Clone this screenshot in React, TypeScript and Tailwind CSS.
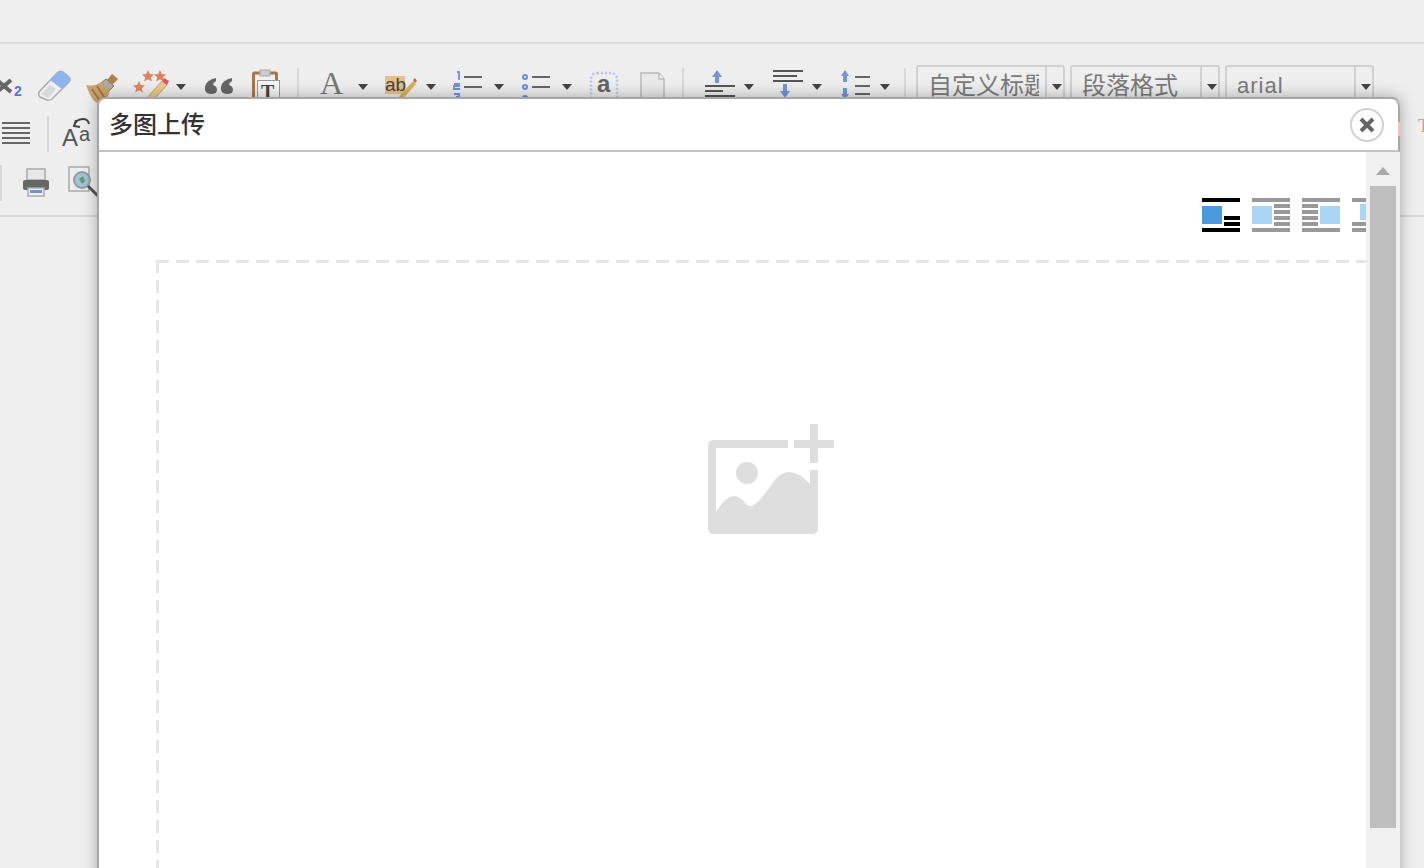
const Caret = ({ className = "" }: { className?: string }) => (
  <svg width="10" height="6" viewBox="0 0 10 6" className={"shrink-0 " + className}>
    <path d="M0 0h10L5 6z" fill="#444" />
  </svg>
);

const Sep = ({ className = "" }: { className?: string }) => (
  <div className={"w-0.5 self-start bg-[#d9d9d9] shrink-0 " + className} />
);

const Icon = ({ w, h, className = "", children }: { w: number; h: number; className?: string; children: React.ReactNode }) => (
  <svg width={w} height={h} viewBox={`0 0 ${w} ${h}`} className={"shrink-0 overflow-visible " + className}>
    {children}
  </svg>
);

const Lines = ({ x, ys, w }: { x: number; ys: number[]; w: number }) => (
  <>
    {ys.map((y) => (
      <rect key={y} x={x} y={y} width={w} height="2" fill="#666" />
    ))}
  </>
);

const Star = ({ x, y }: { x: number; y: number }) => (
  <path
    d={`M${x} ${y - 6}l1.8 4 4.2.4-3.2 2.8 1 4.2-3.8-2.2-3.8 2.2 1-4.2-3.2-2.8 4.2-.4z`}
    fill="#e2805a"
  />
);

const SelectBox = ({ label, width, text, className = "" }: { label: string; width: string; text: string; className?: string }) => (
  <div className={"flex h-10 shrink-0 border-2 border-[#d0d0d0] rounded-t-[3px] " + width + " " + className}>
    <div className="flex-1 min-w-0 pl-[10px] pr-[6px] pt-px text-[#7a7a7a]">
      <div className="overflow-hidden whitespace-nowrap">
        <span className={text}>{label}</span>
      </div>
    </div>
    <div className="w-[18px] border-l-2 border-[#d0d0d0] flex justify-end pr-px pt-[17px]">
      <Caret />
    </div>
  </div>
);

const LayoutIcon = ({ mode }: { mode: number }) => {
  const c = mode === 0 ? "#000" : "#999";
  const blue = mode === 0 ? "#4a9ae0" : "#a9d6f5";
  return (
    <Icon w={38} h={34} className="mr-3">
      <rect x="0" y="0" width="38" height="4" fill={c} />
      {mode !== 3 && <rect x="0" y="30" width="38" height="4" fill={c} />}
      {mode === 0 && (
        <>
          <rect x="0" y="8" width="20" height="18" fill={blue} />
          <rect x="22" y="18" width="16" height="4" fill={c} />
          <rect x="22" y="24" width="16" height="4" fill={c} />
        </>
      )}
      {mode === 1 && (
        <>
          <rect x="0" y="8" width="20" height="18" fill={blue} />
          {[6, 12, 18, 24].map((y) => (
            <rect key={y} x="22" y={y} width="16" height="4" fill={c} />
          ))}
        </>
      )}
      {mode === 2 && (
        <>
          <rect x="18" y="8" width="20" height="18" fill={blue} />
          {[6, 12, 18, 24].map((y) => (
            <rect key={y} x="0" y={y} width="16" height="4" fill={c} />
          ))}
        </>
      )}
      {mode === 3 && (
        <>
          <rect x="8" y="6" width="20" height="16" fill={blue} />
          <rect x="0" y="24" width="38" height="4" fill={c} />
          <rect x="0" y="30" width="38" height="4" fill={c} />
        </>
      )}
    </Icon>
  );
};

const App = () => {
  return (
    <div className="relative h-[868px] w-[1424px] overflow-hidden bg-[#efefef] font-['Liberation_Sans','Noto_Sans_CJK_SC',sans-serif]">
      <div className="h-11 border-b-2 border-[#dcdcdc]" />

      {/* toolbar */}
      <div className="h-[173px] border-b-2 border-[#d8d8d8] bg-[#eeeeee] overflow-hidden">
        <div className="flex h-[72px] items-start pt-[21px]">
          <Icon w={22} h={26} className="mt-[5px]">
            <path d="M-3 10l14 12M11 10L-3 22" stroke="#666" strokeWidth="4" fill="none" />
            <text x="14" y="26" fontSize="14" fontWeight="700" fill="#5577dd" fontFamily="Liberation Sans">2</text>
          </Icon>
          <Icon w={32} h={32} className="ml-4 mt-[5px]">
            <path d="M1 22L19 3q3-3 6-1l6 5q2 2 0 5L14 29q-3 2-5 1l-7-3q-2-2-1-5z" fill="#efefef" stroke="#aaa" strokeWidth="1.5" />
            <path d="M19 3q3-3 6-1l6 5q2 2 0 5l-7 7-12-9z" fill="#8db4ee" />
            <path d="M3 24l7 4 8-9-6-4z" fill="#d8d8d8" />
          </Icon>
          <Icon w={32} h={32} className="ml-4 mt-[9px]">
            <path d="M26 0l6 5-6 6-5-5z" fill="#b07f4b" />
            <path d="M20 5l8 7-5 5-8-8z" fill="#aaa" stroke="#8a7a60" />
            <path d="M0 11q9 2 15-3l9 9q-2 7-9 15-3-1-5-4-4-1-10-17z" fill="#cba26c" />
            <path d="M6 15l10 15M11 12l9 14" stroke="#96703f" strokeWidth="1.5" />
          </Icon>
          <Icon w={36} h={36} className="ml-4 mt-[2px]">
            <Star x={14} y={9} />
            <Star x={26} y={9} />
            <Star x={5} y={20} />
            <path d="M11 33l17-19 5 4-18 20z" fill="#eac98c" stroke="#cfa25e" />
            <path d="M28 14l2-3 5 3-2 4z" fill="#d9586a" />
          </Icon>
          <Caret className="ml-[6px] mt-[19px]" />
          <Icon w={30} h={16} className="ml-[18px] mt-[13px]">
            <path d="M1 9Q2 2 12 0v3Q9 5 9 7q4 1 4 5 0 4-6 4-7 0-6-7zM17 9q1-7 11-9v3q-3 2-3 4 4 1 4 5 0 4-6 4-7 0-6-7z" fill="#666" />
          </Icon>
          <Icon w={28} h={34} className="ml-[18px] mt-[5px]">
            <rect x="1.5" y="3" width="23" height="30" rx="1" fill="#f0f0f0" stroke="#a9774c" strokeWidth="3" />
            <rect x="8" y="0" width="10" height="6" fill="#ccc" stroke="#aaa" />
            <rect x="5.5" y="10.5" width="22" height="22" fill="#f4f4f4" stroke="#999" />
            <text x="9" y="29" fontSize="20" fontWeight="700" fill="#444" fontFamily="Liberation Serif">T</text>
          </Icon>
          <Sep className="ml-[17px] h-[33px] mt-[3px]" />
          <span className="ml-[21px] w-[26px] shrink-0 font-['Liberation_Serif',serif] text-[32px] leading-9 text-[#777]">A</span>
          <Caret className="ml-3 mt-[19px]" />
          <Icon w={32} h={30} className="ml-[17px] mt-[6px]">
            <rect x="0" y="5" width="20" height="18" fill="#e6c088" />
            <text x="0" y="20" fontSize="19" fill="#444" fontFamily="Liberation Sans">ab</text>
            <path d="M12 28l16-18 3 3-16 18z" fill="#d8b060" />
            <path d="M28 9l2-2 2 3-2 2z" fill="#d9586a" />
          </Icon>
          <Caret className="ml-[9px] mt-[19px]" />
          <Icon w={30} h={32} className="ml-[18px] mt-[6px]">
            <path d="M3 1h2v8M0 13h5v2H0v3h6M0 23h5v3H2h3v3H0" stroke="#6d8fe0" strokeWidth="1.8" fill="none" />
            <Lines x={10} ys={[5, 15, 26]} w={18} />
          </Icon>
          <Caret className="ml-[10px] mt-[19px]" />
          <Icon w={30} h={32} className="ml-[18px] mt-[6px]">
            <circle cx="3" cy="6" r="2" fill="none" stroke="#6d8fe0" strokeWidth="2" />
            <circle cx="3" cy="16" r="2" fill="none" stroke="#6d8fe0" strokeWidth="2" />
            <circle cx="3" cy="27" r="2" fill="none" stroke="#6d8fe0" strokeWidth="2" />
            <Lines x={10} ys={[5, 15, 26]} w={18} />
          </Icon>
          <Caret className="ml-[10px] mt-[19px]" />
          <Icon w={28} h={32} className="ml-[18px] mt-[7px]">
            <rect x="1" y="1" width="26" height="30" rx="6" fill="none" stroke="#b4c6f0" strokeWidth="2.5" strokeDasharray="2 2" />
            <text x="7" y="20" fontSize="24" fontWeight="700" fill="#666" fontFamily="Liberation Sans">a</text>
          </Icon>
          <Icon w={26} h={34} className="ml-[22px] mt-[7px]">
            <path d="M1 1h18l5 6v27H1z" fill="#e9e9ea" stroke="#bbb" strokeWidth="1.5" />
            <path d="M19 1v6h5" fill="#f4f4f4" stroke="#bbb" strokeWidth="1.5" />
          </Icon>
          <Sep className="ml-4 h-[33px] mt-[3px]" />
          <Icon w={30} h={34} className="ml-[21px] mt-[5px]">
            <path d="M12 0l5 7h-3v6h-4V7H7z" fill="#7794d8" />
            <rect x="0" y="15" width="30" height="2" fill="#555" />
            <rect x="0" y="20" width="18" height="2" fill="#555" />
            <rect x="0" y="25" width="30" height="2" fill="#555" />
          </Icon>
          <Caret className="ml-[9px] mt-[19px]" />
          <Icon w={30} h={36} className="ml-[19px] mt-[5px]">
            <rect x="0" y="0" width="30" height="2" fill="#555" />
            <rect x="0" y="5" width="24" height="2" fill="#555" />
            <rect x="0" y="10" width="30" height="2" fill="#555" />
            <path d="M10 14h4v7h3l-5 7-5-7h3z" fill="#7794d8" />
          </Icon>
          <Caret className="ml-[9px] mt-[19px]" />
          <Icon w={30} h={34} className="ml-[18px] mt-[5px]">
            <path d="M5 0l4 6H7v6H3V6H1zM5 30l4-6H7v-6H3v6H1z" fill="#7794d8" />
            <Lines x={15} ys={[6, 15, 23]} w={15} />
          </Icon>
          <Caret className="ml-[10px] mt-[19px]" />
          <Sep className="ml-[14px] h-[33px] mt-[3px]" />
          <SelectBox label="自定义标题" width="w-[149px]" text="text-[24px] leading-9" className="ml-[10px]" />
          <SelectBox label="段落格式" width="w-[150px]" text="text-[24px] leading-9" className="ml-[5px]" />
          <SelectBox label="arial" width="w-[149px]" text="text-[22px] leading-9 tracking-[1px]" className="ml-[5px]" />
        </div>
        <div className="flex h-[49px] items-start pl-[2px]">
          <Icon w={28} h={26} className="mt-[6px]">
            <Lines x={0} ys={[0, 5, 10, 15, 20]} w={28} />
          </Icon>
          <Sep className="ml-[17px] h-9" />
          <Icon w={30} h={32} className="ml-[13px] mt-px">
            <path d="M12 9q2-7 9-7 5 0 6 5M14 3l-2 6 6 1" stroke="#444" strokeWidth="2" fill="none" />
            <text x="0" y="29" fontSize="24" fill="#555" fontFamily="Liberation Sans">A</text>
            <text x="17" y="24" fontSize="20" fill="#555" fontFamily="Liberation Sans">a</text>
          </Icon>
        </div>
        <div className="flex items-start">
          <Sep className="h-9" />
          <Icon w={28} h={30} className="ml-5 mt-[3px]">
            <rect x="5" y="1" width="18" height="11" fill="#e8e8e8" stroke="#aaa" strokeWidth="1.5" />
            <rect x="1" y="12" width="26" height="10" rx="2" fill="#666" />
            <rect x="6" y="20" width="16" height="8" fill="#f0f0f0" stroke="#aaa" strokeWidth="1.5" />
            <rect x="8" y="22" width="12" height="3" fill="#6d8fe0" />
          </Icon>
          <Icon w={30} h={32} className="ml-[18px] mt-px">
            <rect x="1" y="1" width="20" height="24" fill="#eee" stroke="#aaa" strokeWidth="1.5" />
            <circle cx="14" cy="14" r="8" fill="#9fc3de" stroke="#999" strokeWidth="2" />
            <path d="M11 13l4-3 2 5-3 3z" fill="#6e9a5c" />
            <path d="M20 20l10 10" stroke="#555" strokeWidth="3" />
          </Icon>
        </div>
      </div>

      {/* dialog */}
      <div className="absolute left-[97px] top-[97px] h-[800px] w-[1303px] flex flex-col rounded-t-lg border-l-2 border-t-2 border-[#a6a6a6] bg-white shadow-[0_0_16px_rgba(0,0,0,0.3)]">
        <div className="flex h-[53px] shrink-0 items-center justify-between rounded-tr-lg border-b-2 border-r-2 border-b-[#c4c4c4] border-r-[#a6a6a6] pl-[10px] pr-[14px]">
          <span className="text-2xl leading-none font-medium text-[#333]">多图上传</span>
          <div className="flex size-[34px] items-center justify-center rounded-full border-2 border-[#d2d2d2]">
            <svg width="16" height="16" viewBox="0 0 16 16">
              <path d="M2 2l12 12M14 2L2 14" stroke="#666" strokeWidth="4" />
            </svg>
          </div>
        </div>
        <div className="flex flex-1 min-h-0">
          <div className="relative flex-1 min-w-0 overflow-hidden">
            <div className="absolute left-[1103px] top-[46px] flex w-[200px]">
              {[0, 1, 2, 3].map((m) => (
                <LayoutIcon key={m} mode={m} />
              ))}
            </div>
            <div className="absolute left-[57px] top-[108px] h-[3px] w-[1300px] bg-[repeating-linear-gradient(90deg,#e6e6e6_0,#e6e6e6_13px,transparent_13px,transparent_20px)]" />
            <div className="absolute left-[57px] top-[108px] h-[700px] w-[3px] bg-[repeating-linear-gradient(180deg,#e6e6e6_0,#e6e6e6_13px,transparent_13px,transparent_20px)]" />
            <svg width="126" height="110" viewBox="0 0 126 110" className="absolute left-[609px] top-[272px]">
              <path d="M8 88Q18 72 26 72q6 0 12 8 4 4 8 1 8-6 18-21 8-13 18-12 10 1 20 12V46h8v58q0 6-6 6H6q-6 0-6-6V22q0-6 6-6h74v8H8z" fill="#dedede" />
              <circle cx="39" cy="49" r="11" fill="#dedede" />
              <path d="M86 16h40v8H86zM102 0h8v39h-8z" fill="#dedede" />
            </svg>
          </div>
          <div className="w-[34px] shrink-0 bg-[#f0f0f0] px-1">
            <svg width="26" height="10" viewBox="0 0 26 10" className="mt-[14px]">
              <path d="M6 9h14L13 1z" fill="#a9a9a9" />
            </svg>
            <div className="mt-[10px] h-[642px] w-[26px] bg-[#bebebe]" />
          </div>
        </div>
      </div>

      {/* stray icons peeking out beside the dialog */}
      <div className="absolute left-[1398px] top-[122px] h-[14px] w-1 bg-[#e6c4c2]" />
      <span className="absolute left-[1418px] top-[116px] font-['Liberation_Serif',serif] text-lg leading-5 text-[#aaa]">T</span>
    </div>
  );
};

export default App;
